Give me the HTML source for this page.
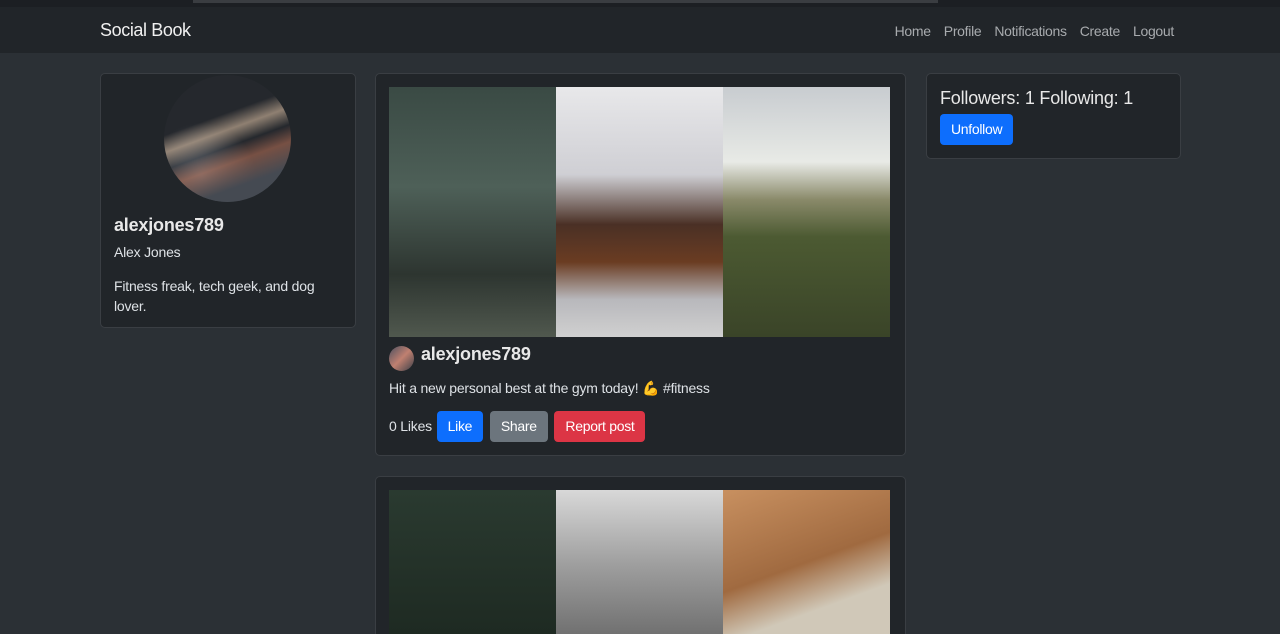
<!DOCTYPE html>
<html style="width:1280px;height:634px;overflow:hidden"><head><meta charset="utf-8"><style>
*{box-sizing:border-box;margin:0;padding:0}
body{width:1280px;height:634px;overflow:hidden;background:#2b3035;font-family:"Liberation Sans",sans-serif;color:#dee2e6;position:relative;letter-spacing:-0.2px}
.top{position:absolute;left:0;top:0;width:1280px;height:7px;background:#1c1f23}
.top i{position:absolute;left:193px;top:0;width:745px;height:3px;background:#3a3d41}
nav{position:absolute;top:7px;left:0;width:1280px;height:46px;background:#212529}
.brand{position:absolute;left:100px;top:13px;font-size:18px;color:#f0f0f0;letter-spacing:-0.4px}
.links{position:absolute;right:106px;top:16px;font-size:14px;color:#a8abae;letter-spacing:-0.3px}
.links span{margin-left:13px}
.card{position:absolute;background:#212529;border:1px solid #3a3e43;border-radius:5px}
.btn{display:inline-block;border-radius:4px;color:#fff;font-size:14px;height:31px;line-height:31px;padding:0 11px;margin-right:3px;letter-spacing:-0.3px}
.img{position:absolute;width:167px}
</style></head><body>
<div class="top"><i></i></div>
<nav><div class="brand">Social Book</div><div class="links"><span>Home</span><span>Profile</span><span>Notifications</span><span>Create</span><span>Logout</span></div></nav>

<div class="card" style="left:100px;top:73px;width:256px;height:255px">
 <div style="position:absolute;left:63px;top:1px;width:127px;height:127px;border-radius:50%;background:radial-gradient(circle at 30% 80%,#5a6068,#25282d 40%),linear-gradient(150deg,#1a1d30,#c97a50 55%,#3a3f48)"></div>
 <div style="position:absolute;left:63px;top:1px;width:127px;height:127px;border-radius:50%;background:linear-gradient(160deg,transparent 35%,rgba(230,200,170,.55) 45%,transparent 55%,rgba(200,120,90,.5) 65%,#454a52 80%)"></div>
 <div style="position:absolute;left:13px;top:141px;font-size:18px;font-weight:bold;color:#e8e8e8">alexjones789</div>
 <div style="position:absolute;left:13px;top:170px;font-size:14px">Alex Jones</div>
 <div style="position:absolute;left:13px;top:202px;font-size:14px;line-height:20px;width:220px">Fitness freak, tech geek, and dog lover.</div>
</div>

<div class="card" style="left:375px;top:73px;width:531px;height:383px">
 <div class="img" style="left:13px;top:13px;height:250px;background:linear-gradient(180deg,#3a4a44,#4e6058 40%,#2d3530 75%,#50584e)"></div>
 <div class="img" style="left:180px;top:13px;height:250px;background:linear-gradient(180deg,#e8e8ea 0%,#cfcfd4 35%,#4a3025 55%,#6a3c22 70%,#b8b8bc 85%,#d0d0d0)"></div>
 <div class="img" style="left:347px;top:13px;height:250px;background:linear-gradient(180deg,#c8ccd0,#e8eae6 30%,#8a8a6a 45%,#4c5a32 60%,#3a4428)"></div>
 <div style="position:absolute;left:13px;top:272px;width:25px;height:25px;border-radius:50%;background:linear-gradient(135deg,#4a5060,#c08070,#3a3f48)"></div>
 <div style="position:absolute;left:45px;top:270px;font-size:18px;font-weight:bold;color:#e8e8e8">alexjones789</div>
 <div style="position:absolute;left:13px;top:306px;font-size:14px">Hit a new personal best at the gym today! 💪 #fitness</div>
 <div style="position:absolute;left:13px;top:337px;font-size:14px;line-height:28px">0 Likes <span class="btn" style="background:#0d6efd;margin-left:1px">Like</span> <span class="btn" style="background:#6c757d">Share</span> <span class="btn" style="background:#dc3545">Report post</span></div>
</div>

<div class="card" style="left:375px;top:476px;width:531px;height:158px;border-bottom:none;border-radius:5px 5px 0 0">
 <div class="img" style="left:13px;top:13px;height:145px;background:linear-gradient(180deg,#2a3a30,#1e2a22)"></div>
 <div class="img" style="left:180px;top:13px;height:145px;background:linear-gradient(180deg,#d8d8d8,#a0a0a0 50%,#707070)"></div>
 <div class="img" style="left:347px;top:13px;height:145px;background:linear-gradient(160deg,#c89060,#a06a40 50%,#d0c8b8 75%)"></div>
</div>

<div class="card" style="left:926px;top:73px;width:255px;height:86px">
 <div style="position:absolute;left:13px;top:14px;font-size:18px;color:#e8e8e8">Followers: 1 Following: 1</div>
 <div class="btn" style="position:absolute;left:13px;top:40px;background:#0d6efd">Unfollow</div>
</div>
</body></html>
